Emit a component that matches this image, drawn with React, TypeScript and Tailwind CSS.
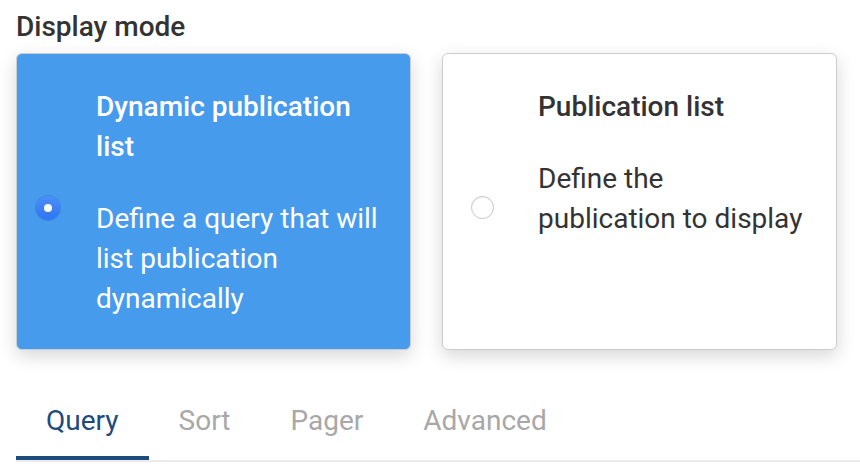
import React from "react";

const font = { fontFamily: "Roboto, 'Noto Sans', sans-serif" };

function SelectedRadio() {
  return (
    <div className="w-[24px] h-[24px] rounded-full bg-gradient-to-b from-[#4c8ef8] to-[#2f74f2] flex items-center justify-center shrink-0 self-center mt-[9px] shadow-[0_0_0_1px_rgba(40,100,220,0.35)]">
      <div className="w-[8px] h-[8px] rounded-full bg-white" />
    </div>
  );
}

function EmptyRadio() {
  return (
    <div className="w-[23px] h-[23px] rounded-full bg-white border border-[#c6c6c6] shrink-0 self-center mt-[9px] shadow-[inset_0_1px_1px_rgba(0,0,0,0.06)]" />
  );
}

export default function App() {
  const tabs = ["Query", "Sort", "Pager", "Advanced"];
  return (
    <div className="w-[860px] h-[472px] bg-white overflow-hidden" style={font}>
      <div className="pl-4 pr-[23px] pt-[11px]">
        <div className="text-[28px] leading-[32px] font-medium text-[#333333]">Display mode</div>
        <div className="grid grid-cols-2 gap-[31px] mt-[10px]">
          <div className="flex rounded-[6px] bg-[#479bec] border border-[#c9cfd6] shadow-[0_6px_18px_rgba(0,0,0,0.16)] pl-[19px] pt-[33px] pb-[30px]">
            <SelectedRadio />
            <div className="ml-[36px] text-white whitespace-nowrap">
              <div className="text-[28px] leading-[40px] font-medium mb-[32px]">
                Dynamic publication
                <br />
                list
              </div>
              <div className="text-[28px] leading-[40px]">
                Define a query that will
                <br />
                list publication
                <br />
                dynamically
              </div>
            </div>
          </div>
          <div className="flex rounded-[6px] bg-white border border-[#cccccc] shadow-[0_6px_18px_rgba(0,0,0,0.16)] pl-[28px] pt-[33px] pb-[30px]">
            <EmptyRadio />
            <div className="ml-[44px] text-[#333333] whitespace-nowrap">
              <div className="text-[28px] leading-[40px] font-medium mb-[32px]">Publication list</div>
              <div className="text-[28px] leading-[40px]">
                Define the
                <br />
                publication to display
              </div>
            </div>
          </div>
        </div>
      </div>
      <div className="pl-4 mt-[50px]">
        <div className="flex border-b-2 border-[#ebebeb]">
          {tabs.map((t, i) => (
            <div
              key={t}
              className={
                i === 0
                  ? "px-[30px] pt-[1px] pb-[15px] border-b-4 border-[#1d4b7c] text-[#1d4b7c] text-[28px] leading-[40px]"
                  : "px-[30px] pt-[1px] pb-[15px] border-b-4 border-transparent text-[#a8a8a8] text-[28px] leading-[40px]"
              }
            >
              {t}
            </div>
          ))}
        </div>
      </div>
    </div>
  );
}
